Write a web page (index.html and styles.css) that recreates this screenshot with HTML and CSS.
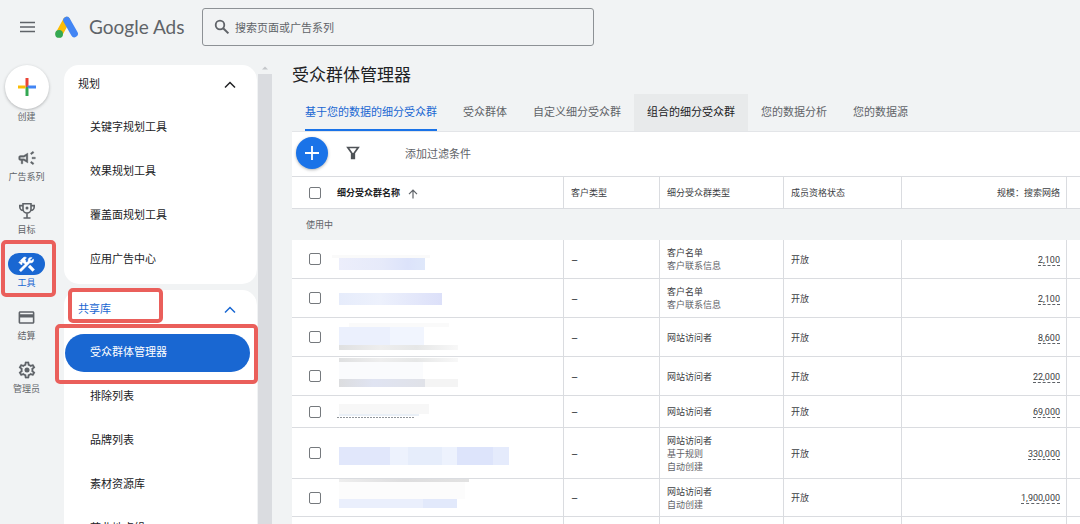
FILE: index.html
```html
<!DOCTYPE html>
<html lang="zh-CN">
<head>
<meta charset="utf-8">
<title>受众群体管理器 - Google Ads</title>
<link rel="stylesheet" href="styles.css">
</head>
<body>
<header class="topbar">
  <button class="menu-btn" aria-label="菜单">
    <svg width="16" height="12" viewBox="0 0 16 12"><path d="M0 1.5h15M0 6h15M0 10.5h15" stroke="#5f6368" stroke-width="1.7"/></svg>
  </button>
  <a class="brand" href="#">
    <svg width="24" height="23" viewBox="0 0 24 23" fill="none" stroke-linecap="round">
      <path d="M4.2 17.8 11.6 4.3" stroke="#fbbc04" stroke-width="7"/>
      <path d="M11.7 4.2 19.4 17.8" stroke="#4285f4" stroke-width="7"/>
      <circle cx="4.1" cy="17.9" r="3.9" fill="#34a853"/>
    </svg>
    <span class="wordmark">Google Ads</span>
  </a>
  <div class="search">
    <svg width="16" height="16" viewBox="0 0 16 16" fill="none" stroke="#5f6368"><circle cx="6" cy="6" r="4.3" stroke-width="1.8"/><path d="m9.2 9.2 5.2 5.2" stroke-width="2"/></svg>
    <input type="text" aria-label="搜索" placeholder="搜索页面或广告系列">
  </div>
</header>

<div class="layout">
  <nav class="rail" aria-label="主导航">
    <button class="rail-item create">
      <span class="create-icon"><svg width="20" height="20" viewBox="0 0 20 20"><path d="M8.5 1h3v9h-3z" fill="#ea4335"/><path d="M8.5 10h3v9h-3z" fill="#34a853"/><path d="M1 8.5h7.5v3H1z" fill="#fbbc04"/><path d="M10 8.5h9v3h-7.5z" fill="#4285f4"/></svg></span>
      <span class="rail-label">创建</span>
    </button>
    <button class="rail-item">
      <span class="rail-icon"><svg width="20" height="20" viewBox="0 0 24 24" fill="#5f6368"><path d="M18 11v2h4v-2zM16 17.61l3.2 2.39 1.2-1.6-3.2-2.4zM20.4 5.6 19.2 4 16 6.4 17.2 8zM4 9c-1.1 0-2 .9-2 2v2c0 1.1.9 2 2 2h1v4h2v-4h1l5 3V6L8 9H4zm5.03 1.71L11 9.53v4.94l-1.97-1.18-.48-.29H4v-2h4.55z" stroke="#5f6368" stroke-width=".4"/></svg></span>
      <span class="rail-label">广告系列</span>
    </button>
    <button class="rail-item">
      <span class="rail-icon"><svg width="18" height="18" viewBox="0 0 18 18" fill="none" stroke="#5f6368" stroke-width="1.6"><path d="M5 1.8h8V7a4 4 0 0 1-8 0zM5 3.6H1.8V5A3.4 3.4 0 0 0 5.2 8.4M13 3.6h3.2V5a3.4 3.4 0 0 1-3.4 3.4M9 11v4.5M5.5 16h7"/><circle cx="9" cy="6" r="1.5" fill="#5f6368" stroke="none"/></svg></span>
      <span class="rail-label">目标</span>
    </button>
    <button class="rail-item active">
      <span class="rail-icon"><svg width="19" height="19" viewBox="0 0 24 24" fill="#fff"><path d="m13.78 15.17 2.82-2.82 5.9 5.9-2.82 2.82z"/><path d="M17.5 10c1.93 0 3.5-1.57 3.5-3.5 0-.58-.16-1.12-.41-1.6l-2.7 2.7-1.49-1.49 2.7-2.7c-.48-.25-1.02-.41-1.6-.41C15.57 3 14 4.57 14 6.5c0 .41.08.8.21 1.16l-1.85 1.85-1.78-1.78.71-.71-1.41-1.41L12 3.49c-1.17-1.17-3.07-1.17-4.24 0L4.22 7.03l1.41 1.41H2.81l-.71.71 3.54 3.54.71-.71V9.15l1.41 1.41.71-.71 1.78 1.78-7.41 7.41 2.12 2.12L16.34 9.79c.36.13.75.21 1.16.21z" stroke="#fff" stroke-width=".6"/></svg></span>
      <span class="rail-label">工具</span>
      <span class="callout callout-rail"></span>
    </button>
    <button class="rail-item">
      <span class="rail-icon"><svg width="19" height="19" viewBox="0 0 24 24" fill="#5f6368"><path d="M20 4H4c-1.11 0-1.99.89-1.99 2L2 18c0 1.11.89 2 2 2h16c1.11 0 2-.89 2-2V6c0-1.11-.89-2-2-2zm0 14H4v-6h16v6zm0-10H4V6h16v2z"/></svg></span>
      <span class="rail-label">结算</span>
    </button>
    <button class="rail-item">
      <span class="rail-icon"><svg width="20" height="20" viewBox="0 0 24 24" fill="#5f6368"><path d="M19.43 12.98c.04-.32.07-.64.07-.98 0-.34-.03-.66-.07-.98l2.11-1.65c.19-.15.24-.42.12-.64l-2-3.46c-.09-.16-.26-.25-.44-.25-.06 0-.12.01-.17.03l-2.49 1c-.52-.4-1.08-.73-1.69-.98l-.38-2.65C14.46 2.18 14.25 2 14 2h-4c-.25 0-.46.18-.49.42l-.38 2.65c-.61.25-1.17.59-1.69.98l-2.49-1c-.06-.02-.12-.03-.18-.03-.17 0-.34.09-.43.25l-2 3.46c-.13.22-.07.49.12.64l2.11 1.65c-.04.32-.07.65-.07.98 0 .33.03.66.07.98l-2.11 1.65c-.19.15-.24.42-.12.64l2 3.46c.09.16.26.25.44.25.06 0 .12-.01.17-.03l2.49-1c.52.4 1.08.73 1.69.98l.38 2.65c.03.24.24.42.49.42h4c.25 0 .46-.18.49-.42l.38-2.65c.61-.25 1.17-.59 1.69-.98l2.49 1c.06.02.12.03.18.03.17 0 .34-.09.43-.25l2-3.46c.12-.22.07-.49-.12-.64l-2.11-1.65zm-1.98-1.71c.04.31.05.52.05.73 0 .21-.02.43-.05.73l-.14 1.13.89.7 1.08.84-.7 1.21-1.27-.51-1.04-.42-.9.68c-.43.32-.84.56-1.25.73l-1.06.43-.16 1.13-.2 1.35h-1.4l-.19-1.35-.16-1.13-1.06-.43c-.43-.18-.83-.41-1.23-.71l-.91-.7-1.06.43-1.27.51-.7-1.21 1.08-.84.89-.7-.14-1.13c-.03-.31-.05-.54-.05-.74s.02-.43.05-.73l.14-1.13-.89-.7-1.08-.84.7-1.21 1.27.51 1.04.42.9-.68c.43-.32.84-.56 1.25-.73l1.06-.43.16-1.13.2-1.35h1.39l.19 1.35.16 1.13 1.06.43c.43.18.83.41 1.23.71l.91.7 1.06-.43 1.27-.51.7 1.21-1.07.85-.89.7.14 1.13z" stroke="#5f6368" stroke-width=".2"/><circle cx="12" cy="12" r="3"/></svg></span>
      <span class="rail-label">管理员</span>
    </button>
  </nav>

  <aside class="panel">
    <div class="cards">
      <section class="card">
        <button class="card-head"><span>规划</span><svg width="12" height="8" viewBox="0 0 12 8"><path d="m1 6.5 5-5 5 5" fill="none" stroke="currentColor" stroke-width="1.5"/></svg></button>
        <a class="nav-link" href="#">关键字规划工具</a>
        <a class="nav-link" href="#">效果规划工具</a>
        <a class="nav-link" href="#">覆盖面规划工具</a>
        <a class="nav-link" href="#">应用广告中心</a>
      </section>
      <section class="card">
        <button class="card-head open"><span>共享库</span><svg width="12" height="8" viewBox="0 0 12 8"><path d="m1 6.5 5-5 5 5" fill="none" stroke="currentColor" stroke-width="1.5"/></svg><span class="callout callout-head"></span></button>
        <a class="nav-link current" href="#">受众群体管理器<span class="callout callout-link"></span></a>
        <a class="nav-link" href="#">排除列表</a>
        <a class="nav-link" href="#">品牌列表</a>
        <a class="nav-link" href="#">素材资源库</a>
        <a class="nav-link" href="#">营业地点组</a>
      </section>
    </div>
    <div class="scrollbar">
      <svg width="8" height="9" viewBox="0 0 8 9"><path d="M1 4.5 4 1.5l3 3z" fill="#c4c7ca"/></svg>
      <div class="thumb"></div>
    </div>
  </aside>

  <main class="content">
    <h1>受众群体管理器</h1>
    <nav class="tabs" aria-label="标签页">
      <a class="tab selected" href="#">基于您的数据的细分受众群</a>
      <a class="tab" href="#">受众群体</a>
      <a class="tab" href="#">自定义细分受众群</a>
      <a class="tab hovered" href="#">组合的细分受众群</a>
      <a class="tab" href="#">您的数据分析</a>
      <a class="tab" href="#">您的数据源</a>
    </nav>
    <div class="toolbar">
      <button class="fab" aria-label="新建"><svg width="14" height="14" viewBox="0 0 14 14"><path d="M7 0v14M0 7h14" stroke="#fff" stroke-width="1.8"/></svg></button>
      <button class="filter" aria-label="过滤"><svg width="14" height="14" viewBox="0 0 14 14" fill="none" stroke="#4f5357" stroke-width="1.7"><path d="M1.8 1.5h10.400L8.300 7v5.300H5.700V7z"/><path d="M5.500 7h3v5.500h-3z" fill="#4f5357" stroke="none"/></svg></button>
      <button class="add-filter">添加过滤条件</button>
    </div>
    <table>
      <colgroup><col class="c-check"><col><col class="c-kind"><col class="c-seg"><col class="c-status"><col class="c-size"><col class="c-end"></colgroup>
      <thead>
        <tr>
          <th class="check"><input type="checkbox" aria-label="全选"></th>
          <th class="name">细分受众群名称<svg width="10" height="10" viewBox="0 0 10 10"><path d="M5 9.500V1.500M1 5.200l4-4 4 4" fill="none" stroke="#5f6368" stroke-width="1.200"/></svg></th>
          <th>客户类型</th><th>细分受众群类型</th><th>成员资格状态</th><th class="num">规模：搜索网络</th><th></th>
        </tr>
      </thead>
      <tbody>
        <tr class="group"><td colspan="7">使用中</td></tr>
        <tr>
          <td class="check"><input type="checkbox" aria-label="选择第 1 行"></td>
          <td class="masked"><svg width="180" height="38"><defs><linearGradient id="m1"><stop stop-color="#eceefb"/><stop offset=".5" stop-color="#e6eafa"/><stop offset=".8" stop-color="#dce3fa"/><stop offset="1" stop-color="#dfe8fa"/></linearGradient></defs><path d="M0 15h98v3H0z" fill="#fafafa"/><path d="M7 18h86v12H7z" fill="url(#m1)"/></svg></td>
          <td class="dash">–</td><td>客户名单<br><span class="sub">客户联系信息</span></td><td>开放</td><td class="num"><span>2,100</span></td><td></td>
        </tr>
        <tr>
          <td class="check"><input type="checkbox" aria-label="选择第 2 行"></td>
          <td class="masked"><svg width="180" height="38"><defs><linearGradient id="m2"><stop stop-color="#e6ecfb"/><stop offset=".4" stop-color="#edf1fc"/><stop offset="1" stop-color="#dce0f9"/></linearGradient></defs><path d="M7 14h103v12H7z" fill="url(#m2)"/></svg></td>
          <td class="dash">–</td><td>客户名单<br><span class="sub">客户联系信息</span></td><td>开放</td><td class="num"><span>2,100</span></td><td></td>
        </tr>
        <tr>
          <td class="check"><input type="checkbox" aria-label="选择第 3 行"></td>
          <td class="masked"><svg width="180" height="38"><defs><linearGradient id="g3"><stop stop-color="#dfe0e1"/><stop offset=".35" stop-color="#eeeeee"/><stop offset=".65" stop-color="#e6e7e7"/><stop offset="1" stop-color="#f8f8f8"/></linearGradient></defs><path d="M17 5h100v4H17z" fill="#fafafa"/><path d="M7 9h51v18H7z" fill="#ebf0fd"/><path d="M58 9h34v18H58z" fill="#f1f5fe"/><path d="M7 27h119v5H7z" fill="url(#g3)"/></svg></td>
          <td class="dash">–</td><td>网站访问者</td><td>开放</td><td class="num"><span>8,600</span></td><td></td>
        </tr>
        <tr>
          <td class="check"><input type="checkbox" aria-label="选择第 4 行"></td>
          <td class="masked"><svg width="180" height="38"><defs><linearGradient id="g4"><stop stop-color="#dcdddf"/><stop offset=".4" stop-color="#e0e4f2"/><stop offset="1" stop-color="#e0e2e8"/></linearGradient></defs><path d="M7 1h119v4H7z" fill="url(#g3)"/><path d="M7 5h84v17H7z" fill="#fafbfd"/><path d="M7 22h86v8H7z" fill="url(#g4)"/><path d="M93 22h33v8H93z" fill="#f4f4f4"/></svg></td>
          <td class="dash">–</td><td>网站访问者</td><td>开放</td><td class="num"><span>22,000</span></td><td></td>
        </tr>
        <tr class="short">
          <td class="check"><input type="checkbox" aria-label="选择第 5 行"></td>
          <td class="masked"><svg width="180" height="31"><path d="M7 8h90v10H7z" fill="#f7f7f7"/><path d="M7 18h80v2H7z" fill="#eaf0f7"/><path d="M5 21.500h78" stroke="#90959a" stroke-dasharray="2 1"/></svg></td>
          <td class="dash">–</td><td>网站访问者</td><td>开放</td><td class="num"><span>69,000</span></td><td></td>
        </tr>
        <tr class="tall">
          <td class="check"><input type="checkbox" aria-label="选择第 6 行"></td>
          <td class="masked"><svg width="180" height="50"><path d="M7 19h51v18H7z" fill="#e1e7fb"/><path d="M58 19h18v18H58z" fill="#edf2fd"/><path d="M76 19h34v18H76z" fill="#e6edfb"/><path d="M110 19h15v18h-15z" fill="#edf2fd"/><path d="M125 19h36v18h-36z" fill="#dde4fb"/><path d="M161 19h16v18h-16z" fill="#e5ebfc"/></svg></td>
          <td class="dash">–</td><td>网站访问者<br><span class="sub">基于规则<br>自动创建</span></td><td>开放</td><td class="num"><span>330,000</span></td><td></td>
        </tr>
        <tr class="last">
          <td class="check"><input type="checkbox" aria-label="选择第 7 行"></td>
          <td class="masked"><svg width="180" height="37"><defs><linearGradient id="g7"><stop stop-color="#eeeeee"/><stop offset=".5" stop-color="#dededf"/><stop offset="1" stop-color="#e2e2e2"/></linearGradient></defs><path d="M7 0h130v3H7z" fill="url(#g7)"/><path d="M7 3h126v17H7z" fill="#fcfcfc"/><path d="M7 20h84v9H7z" fill="#eaeffc"/><path d="M91 20h34v9H91z" fill="#e2e9fb"/></svg></td>
          <td class="dash">–</td><td>网站访问者<br><span class="sub">自动创建</span></td><td>开放</td><td class="num"><span>1,900,000</span></td><td></td>
        </tr>
        <tr class="last"><td class="check"></td><td class="masked"></td><td></td><td></td><td></td><td class="num"></td><td></td></tr>
      </tbody>
    </table>
  </main>
</div>
</body>
</html>
```
FILE: styles.css
```css
* { box-sizing: border-box; }

body {
  margin: 0;
  height: 100vh;
  overflow: hidden;
  display: flex;
  flex-direction: column;
  background: #f1f3f4;
  color: #3c4043;
  font: 11px/16px Roboto, "Noto Sans CJK SC", sans-serif;
}

button {
  border: 0;
  padding: 0;
  background: none;
  color: inherit;
  font: inherit;
}

a { color: inherit; text-decoration: none; }
svg { display: block; flex: none; }

/* Top bar */
.topbar {
  display: flex;
  align-items: center;
  height: 54px;
  flex: none;
}

.menu-btn {
  display: flex;
  justify-content: center;
  width: 55px;
}

.brand {
  display: flex;
  align-items: center;
  gap: 10px;
  width: 147px;
}

.wordmark {
  color: #5f6368;
  font: 19px/24px Lato, sans-serif;
  white-space: nowrap;
}

.search {
  display: flex;
  align-items: center;
  gap: 5px;
  width: 392px;
  height: 38px;
  padding: 0 11px;
  border: 1px solid #8d9195;
  border-radius: 3px;
}

.search input {
  flex: 1;
  min-width: 0;
  border: 0;
  padding: 4px 0 0;
  outline: 0;
  background: none;
  font: inherit;
}

.search input::placeholder { color: #5f6368; }

.layout {
  display: flex;
  flex: 1;
  min-height: 0;
}

/* Icon rail */
.rail {
  display: flex;
  flex-direction: column;
  gap: 15px;
  flex: none;
  width: 53px;
  margin-right: 11px;
  padding-top: 11px;
}

.rail-item {
  position: relative;
  display: flex;
  flex-direction: column;
  align-items: center;
  color: #5f6368;
}

.rail-item.create { margin-bottom: 7px; }

.create-icon {
  display: grid;
  place-items: center;
  width: 44px;
  height: 44px;
  border-radius: 50%;
  background: #fff;
  box-shadow: 0 1px 3px rgba(60, 64, 67, .35);
}

.rail-icon {
  display: grid;
  place-items: center;
  width: 37px;
  height: 22px;
  border-radius: 11px;
}

.rail-label {
  padding-top: 1px;
  font-size: 9px;
  line-height: 15px;
  white-space: nowrap;
}

.active .rail-icon { background: #1967d2; }
.active .rail-label { color: #1967d2; }

/* Highlight frames */
.callout {
  position: absolute;
  z-index: 1;
  border: 4px solid #ea5f5b;
  border-radius: 5px;
  pointer-events: none;
}

.callout-rail { inset: -13px -3px -6px 1px; }
.callout-head { inset: -2px 94px 8px 4px; }
.callout-link { inset: -10px -8px -12px -10px; }

/* Side panel */
.panel {
  display: flex;
  flex: none;
  width: 209px;
  padding-top: 11px;
}

.cards {
  display: flex;
  flex-direction: column;
  gap: 6px;
  width: 193px;
}

.card {
  display: flex;
  flex-direction: column;
  flex: none;
  padding-bottom: 2px;
  border-radius: 15px;
  background: #fff;
}

.card-head {
  position: relative;
  display: flex;
  align-items: center;
  justify-content: space-between;
  height: 41px;
  padding: 0 21px 2px 14px;
  color: #202124;
}

.card-head.open { color: #1967d2; }

.nav-link {
  position: relative;
  height: 38px;
  margin: 3px 7px 3px 1px;
  padding-left: 25px;
  border-radius: 19px;
  color: #202124;
  line-height: 38px;
}

.nav-link.current {
  background: #1967d2;
  color: #fff;
}

.scrollbar {
  display: flex;
  flex-direction: column;
  align-items: center;
  width: 14px;
  margin-left: 1px;
}

.thumb {
  flex: 1;
  width: 14px;
  background: #dadce0;
}

/* Main content */
.content {
  flex: 1;
  min-width: 0;
  padding: 9px 0 0 19px;
}

h1 {
  margin: 0;
  color: #202124;
  font-size: 17px;
  font-weight: 400;
  line-height: 24px;
}

.tabs {
  display: flex;
  height: 45px;
  padding-top: 7px;
  border-bottom: 1px solid #e3e5e8;
}

.tab {
  display: flex;
  align-items: center;
  margin: 0 13px;
  color: #5f6368;
  white-space: nowrap;
}

.tab.selected {
  color: #1967d2;
  box-shadow: inset 0 -2px #1a73e8;
}

.tab.hovered {
  margin: 0;
  padding: 0 13px;
  background: #e8eaeb;
  color: #202124;
}

.toolbar {
  display: flex;
  align-items: center;
  height: 44px;
  padding: 0 4px 2px;
  background: #fff;
}

.fab {
  display: grid;
  place-items: center;
  width: 32px;
  height: 32px;
  border-radius: 50%;
  background: #1a73e8;
  box-shadow: 0 1px 3px rgba(60, 64, 67, .4);
}

.filter { margin: 0 45px 0 18px; }

.add-filter {
  padding-top: 4px;
  color: #5f6368;
}

/* Segment table */
table {
  width: 100%;
  border-spacing: 0;
  table-layout: fixed;
  background: #fff;
  font-size: 9px;
  line-height: 13px;
}

.c-check { width: 40px; }
.c-kind { width: 96px; }
.c-seg { width: 124px; }
.c-status { width: 118px; }
.c-size { width: 165px; }
.c-end { width: 13px; }

th, td {
  height: 39px;
  padding: 2px 7px 0;
  border-right: 1px solid #dadce0;
  border-bottom: 1px solid #dadce0;
  text-align: left;
  font-weight: 400;
}

th {
  height: 33px;
  border-top: 1px solid #dadce0;
}

th:last-child, td:last-child { border-right: 0; }

th.name {
  padding-left: 5px;
  color: #202124;
  font-weight: 700;
}

th.name svg {
  display: inline-block;
  margin-left: 8px;
  vertical-align: middle;
}

.check {
  padding: 0 0 0 17px;
  border-right: 0;
}

.check input {
  display: block;
  appearance: none;
  width: 12px;
  height: 12px;
  margin: 0;
  border: 1px solid #75797d;
  border-radius: 2px;
}

td.masked { padding: 0; }

.num {
  padding-right: 6px;
  text-align: right;
}

.num span { border-bottom: 1px dashed #5f6368; }
.sub { color: #5f6368; }
.dash { font-size: 11px; }

.group td {
  height: 31px;
  padding-left: 14px;
  border-bottom: 0;
  background: #f1f3f4;
  color: #5f6368;
}

.short td { height: 32px; }
.tall td { height: 51px; }
.last td { height: 38px; }
```
